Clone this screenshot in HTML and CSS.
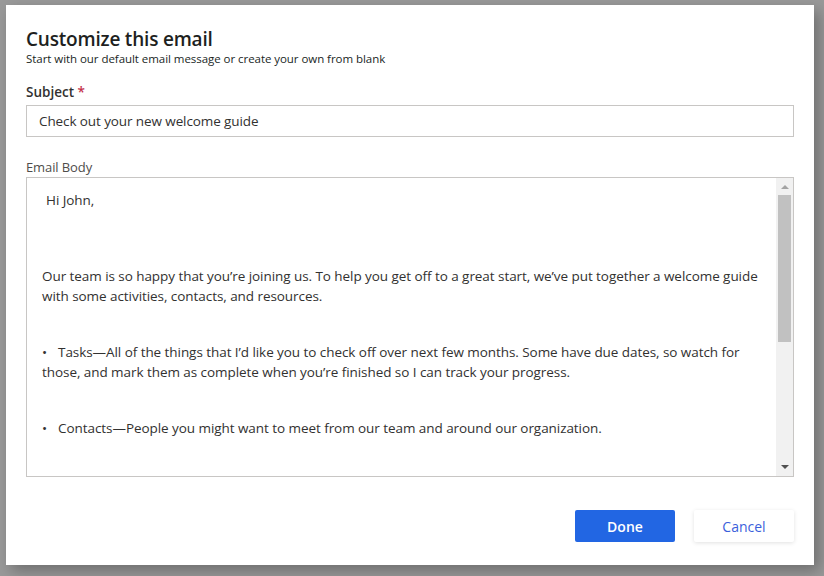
FILE: index.html
```
<!DOCTYPE html>
<html lang="en">
<head>
<meta charset="utf-8">
<title>Customize this email</title>
<link rel="stylesheet" href="styles.css">
</head>
<body>
<div class="dialog">
  <h1 class="title">Customize this email</h1>
  <p class="subtitle">Start with our default email message or create your own from blank</p>

  <label class="label label-strong">Subject <span class="req">*</span></label>
  <div class="input">Check out your new welcome guide</div>

  <label class="label label-body">Email Body</label>
  <div class="editor">
    <div class="editor-content">
      <p class="p greet">Hi John,</p>
      <p class="p">Our team is so happy that you’re joining us. To help you get off to a great start, we’ve put together a welcome guide<br>with some activities, contacts, and resources.</p>
      <p class="p"><span class="bullet">•</span>Tasks—All of the things that I’d like you to check off over next few months. Some have due dates, so watch for<br>those, and mark them as complete when you’re finished so I can track your progress.</p>
      <p class="p"><span class="bullet">•</span>Contacts—People you might want to meet from our team and around our organization.</p>
    </div>
    <div class="scrollbar">
      <div class="arrow arrow-up"></div>
      <div class="thumb"></div>
      <div class="track-fill"></div>
      <div class="arrow arrow-down"></div>
    </div>
  </div>

  <div class="actions">
    <button class="btn btn-primary">Done</button>
    <button class="btn btn-secondary">Cancel</button>
  </div>
</div>
</body>
</html>
```

FILE: styles.css
```
* { box-sizing: border-box; }
html, body { margin: 0; padding: 0; }
body {
  background: #999999;
  width: 824px;
  height: 576px;
  overflow: hidden;
  font-family: "Open Sans", "Noto Sans", sans-serif;
  color: #323130;
}
.dialog {
  margin: 5px 0 0 6px;
  width: 808px;
  height: 560px;
  background: #ffffff;
  padding: 22px 20px 0 20px;
  box-shadow: 5px 6px 14px rgba(0,0,0,0.28);
  display: flex;
  flex-direction: column;
}
.title {
  margin: 0;
  font-size: 19px;
  font-weight: 600;
  line-height: 24px;
  color: #201f1e;
  letter-spacing: -0.2px;
}
.subtitle {
  margin: 1px 0 0 0;
  font-size: 11.5px;
  line-height: 14px;
  color: #201f1e;
  letter-spacing: -0.05px;
}
.label {
  display: block;
  font-size: 13.5px;
  line-height: 18px;
}
.label-strong {
  margin-top: 17px;
  font-weight: 600;
  color: #323130;
}
.req { color: #c4314b; }
.input {
  margin-top: 4px;
  height: 32px;
  border: 1px solid #c8c6c4;
  padding: 0 12px;
  font-size: 13.5px;
  line-height: 30px;
  color: #323130;
  letter-spacing: -0.1px;
}
.label-body {
  margin-top: 21px;
  color: #4f4d4b;
  font-size: 13px;
  letter-spacing: -0.1px;
}
.editor {
  margin-top: 1px;
  height: 300px;
  border: 1px solid #c8c6c4;
  display: flex;
}
.editor-content {
  flex: 1;
  padding: 12px 0 0 15px;
  font-size: 13.5px;
  line-height: 20px;
  color: #323130;
  letter-spacing: -0.06px;
  overflow: hidden;
}
.p { margin: 0 0 36px 0; white-space: nowrap; }
.greet { padding-left: 4px; margin-bottom: 56px; }
.bullet { display: inline-block; width: 16px; }
.scrollbar {
  width: 17px;
  background: #f1f1f1;
  display: flex;
  flex-direction: column;
  align-items: center;
}
.arrow { width: 0; height: 0; border-left: 4px solid transparent; border-right: 4px solid transparent; }
.arrow-up { margin-top: 7px; border-bottom: 4px solid #a3a3a3; }
.arrow-down { margin-bottom: 7px; border-top: 4px solid #505050; }
.thumb { margin-top: 6px; width: 13px; height: 147px; background: #c1c1c1; }
.track-fill { flex: 1; }
.actions {
  margin-top: 33px;
  display: flex;
  justify-content: flex-end;
  gap: 19px;
}
.btn {
  width: 100px;
  height: 32px;
  border-radius: 2px;
  font-family: "Open Sans", "Noto Sans", sans-serif;
  font-size: 14px;
  font-weight: 600;
  border: none;
  padding: 0;
  cursor: pointer;
}
.btn-primary { background: #2266e3; color: #ffffff; }
.btn-secondary {
  background: #ffffff;
  color: #3b5fdb;
  font-weight: 400;
  box-shadow: 0 1px 4px rgba(0,0,0,0.12);
}
```
